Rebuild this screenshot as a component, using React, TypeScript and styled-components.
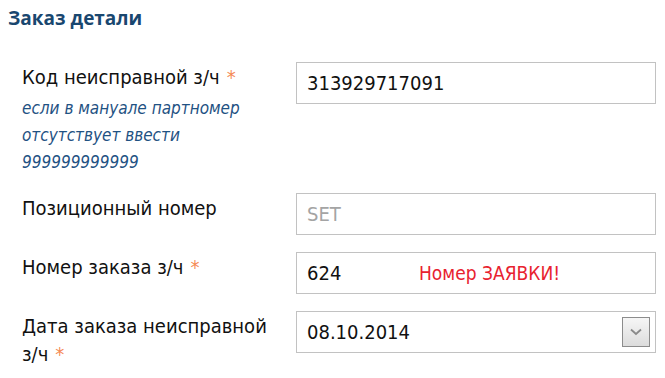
import { createGlobalStyle, styled } from 'styled-components';

const GlobalStyle = createGlobalStyle`
  body {
    margin: 0;
    background: #fff;
    font-family: "DejaVu Sans Condensed", "DejaVu Sans", sans-serif;
  }
`;

const Page = styled.div`
  width: 665px;
  padding: 7px 9px 0 8px;
  box-sizing: border-box;
`;

const Heading = styled.h2`
  margin: 0;
  color: #19476f;
  font-family: "Open Sans", sans-serif;
  font-weight: 700;
  font-size: 19px;
  line-height: 23px;
`;

const Form = styled.div`
  display: flex;
  flex-direction: column;
  gap: 17px;
  margin-top: 32px;
  padding-left: 14px;
`;

const Row = styled.div`
  display: grid;
  grid-template-columns: 274px 360px;
  align-items: start;
`;

const LabelBlock = styled.div`
  display: flex;
  flex-direction: column;
`;

const Label = styled.label`
  padding-top: 1px;
  color: #111;
  font-size: 20px;
  line-height: 28px;
`;

const Required = styled.span`
  margin-left: 7px;
  color: #f58a55;
`;

const Hint = styled.div`
  margin-top: 4px;
  color: #1f5283;
  font-style: italic;
  font-size: 17px;
  line-height: 27px;
`;

const Field = styled.div`
  display: flex;
  align-items: center;
  height: 42px;
  padding: 0 5px 0 10px;
  box-sizing: border-box;
  border: 1px solid #c2c2c2;
  background: #fff;
`;

const Input = styled.input<{ $muted?: boolean; $width?: string }>`
  flex: ${(p) => (p.$width ? 'none' : '1')};
  width: ${(p) => p.$width || 'auto'};
  min-width: 0;
  padding: 0;
  border: none;
  outline: none;
  background: transparent;
  color: ${(p) => (p.$muted ? '#a4a4a4' : '#111')};
  font-family: inherit;
  font-size: 20px;
`;

const Note = styled.span`
  color: #e8222f;
  font-size: 19px;
`;

const SelectButton = styled.div`
  display: flex;
  align-items: center;
  justify-content: center;
  width: 28px;
  height: 30px;
  box-sizing: border-box;
  border: 1px solid #8c8c8c;
  background: linear-gradient(#f6f6f6, #dcdcdc);
`;

const App = () => {
  return (
    <Page>
      <GlobalStyle />
      <Heading>Заказ детали</Heading>
      <Form>
        <Row>
          <LabelBlock>
            <Label>
              Код неисправной з/ч<Required>*</Required>
            </Label>
            <Hint>
              если в мануале партномер
              <br />
              отсутствует ввести
              <br />
              999999999999
            </Hint>
          </LabelBlock>
          <Field>
            <Input readOnly value="313929717091" />
          </Field>
        </Row>

        <Row>
          <Label>Позиционный номер</Label>
          <Field>
            <Input readOnly value="SET" $muted />
          </Field>
        </Row>

        <Row>
          <Label>
            Номер заказа з/ч<Required>*</Required>
          </Label>
          <Field>
            <Input readOnly value="624" $width="112px" />
            <Note>Номер ЗАЯВКИ!</Note>
          </Field>
        </Row>

        <Row>
          <Label>
            Дата заказа неисправной
            <br />
            з/ч<Required>*</Required>
          </Label>
          <Field>
            <Input readOnly value="08.10.2014" />
            <SelectButton>
              <svg width="12" height="8" viewBox="0 0 12 8">
                <path d="M1 1.5 L6 6 L11 1.5" fill="none" stroke="#8a8a8a" strokeWidth="1.8" />
              </svg>
            </SelectButton>
          </Field>
        </Row>
      </Form>
    </Page>
  );
};

export default App;
